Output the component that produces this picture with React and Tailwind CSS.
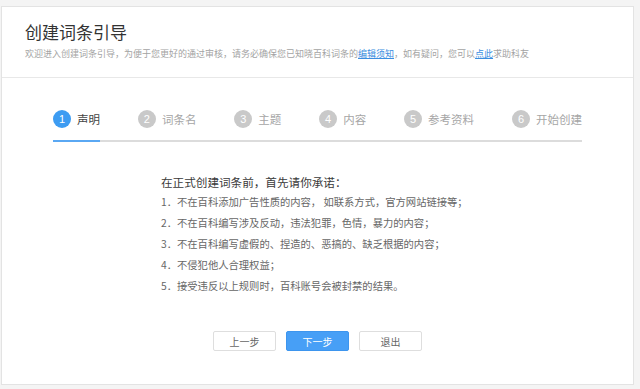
import React from 'react';

const steps = ['声明', '词条名', '主题', '内容', '参考资料', '开始创建'];

const rules = [
  '1．不在百科添加广告性质的内容， 如联系方式，官方网站链接等；',
  '2．不在百科编写涉及反动，违法犯罪，色情，暴力的内容；',
  '3．不在百科编写虚假的、捏造的、恶搞的、缺乏根据的内容；',
  '4．不侵犯他人合理权益；',
  '5．接受违反以上规则时，百科账号会被封禁的结果。',
];

const font = { fontFamily: '"Noto Sans CJK SC", "Noto Sans", sans-serif' };

const App = () => {
  return (
    <div className="w-[640px] h-[389px] bg-[#f4f4f4] pt-[6px] pl-[1px] overflow-hidden" style={font}>
      <div className="w-[633px] h-[379px] bg-white border border-[#e3e3e3] flex flex-col">
        {/* header */}
        <div className="h-[71px] border-b border-[#e8e8e8] pl-[23px] pt-[13px] shrink-0">
          <h1 className="text-[17px] leading-[24px] text-[#333]">创建词条引导</h1>
          <p className="mt-[3px] text-[9px] leading-[14px] text-[#a3a3a3] whitespace-nowrap">
            欢迎进入创建词条引导，为便于您更好的通过审核，请务必确保您已知晓百科词条的
            <a className="text-[#3b8ee0] underline">编辑须知</a>
            ，如有疑问，您可以
            <a className="text-[#3b8ee0] underline">点此</a>
            求助科友
          </p>
        </div>

        {/* steps */}
        <div className="px-[51px] pt-[32px] shrink-0">
          <div className="flex justify-between items-center h-[18px]">
            {steps.map((s, i) => (
              <div key={s} className="flex items-center gap-[6px]">
                <span
                  className={`w-[18px] h-[18px] rounded-full flex items-center justify-center text-white text-[11px] ${
                    i === 0 ? 'bg-[#3d9cf2]' : 'bg-[#c9c9c9]'
                  }`}
                  style={{ fontFamily: '"Liberation Sans", Arial, sans-serif' }}
                >
                  {i + 1}
                </span>
                <span className={`text-[11.5px] leading-[18px] ${i === 0 ? 'text-[#444]' : 'text-[#a6a6a6]'}`}>{s}</span>
              </div>
            ))}
          </div>
          <div className="mt-[12px] h-[2px] bg-[#dcdcdc]">
            <div className="w-[47px] h-[2px] bg-[#5aa8f3]" />
          </div>
        </div>

        {/* rules */}
        <div className="pl-[159px] pt-[31px] shrink-0">
          <h2 className="text-[11.6px] leading-[18px] text-[#3a3a3a]">在正式创建词条前，首先请你承诺：</h2>
          <ul>
            {rules.map((r) => (
              <li key={r} className="text-[10.3px] leading-[21px] text-[#666] whitespace-nowrap">
                {r}
              </li>
            ))}
          </ul>
        </div>

        {/* buttons */}
        <div className="flex justify-center gap-[10px] mt-[35px]">
          <button className="w-[63px] h-[20px] border border-[#dedede] bg-white text-[10px] text-[#666] rounded-[2px]">上一步</button>
          <button className="w-[63px] h-[20px] border border-[#3d95ee] bg-[#479ff6] text-[10px] text-white rounded-[2px]">下一步</button>
          <button className="w-[63px] h-[20px] border border-[#dedede] bg-white text-[10px] text-[#666] rounded-[2px]">退出</button>
        </div>
      </div>
    </div>
  );
};

export default App;
